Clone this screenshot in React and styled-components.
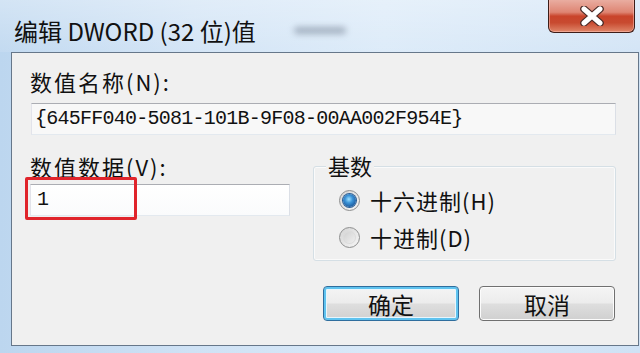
import styled, { createGlobalStyle } from "styled-components";

const CJK = `"Noto Sans CJK SC", "Noto Sans", sans-serif`;
const MONO = `"Liberation Mono", "DejaVu Sans Mono", monospace`;

const GlobalStyle = createGlobalStyle`
  html, body {
    margin: 0;
    padding: 0;
    background: #c9def3;
  }
  body {
    width: 640px;
    height: 353px;
    overflow: hidden;
    font-family: ${CJK};
  }
`;

const App = () => {
  return (
    <>
      <GlobalStyle />
      <Window>
        <TitleBar>
          <Title>编辑 DWORD (32 位)值</Title>
          <Smudge />
          <CloseButton aria-label="关闭">
            <svg width="26" height="20" viewBox="0 0 26 20">
              <path
                d="M5 3 L21 17 M21 3 L5 17"
                stroke="#4a2a26"
                strokeWidth="7.5"
                strokeLinecap="round"
              />
              <path
                d="M5 3 L21 17 M21 3 L5 17"
                stroke="#fff"
                strokeWidth="5"
                strokeLinecap="round"
              />
            </svg>
          </CloseButton>
        </TitleBar>
        <Frame>
          <Client>
            <Label>数值名称(N):</Label>
            <NameField>{"{645FF040-5081-101B-9F08-00AA002F954E}"}</NameField>
            <Lower>
              <div>
                <Label $top={17}>数值数据(V):</Label>
                <DataWrap>
                  <DataField>1</DataField>
                  <Highlight />
                </DataWrap>
              </div>
              <GroupBox>
                <Legend>基数</Legend>
                <RadioRow>
                  <Radio $checked />
                  <RadioText>十六进制(H)</RadioText>
                </RadioRow>
                <RadioRow>
                  <Radio />
                  <RadioText>十进制(D)</RadioText>
                </RadioRow>
              </GroupBox>
            </Lower>
            <Buttons>
              <Button $default>确定</Button>
              <Button>取消</Button>
            </Buttons>
          </Client>
        </Frame>
      </Window>
    </>
  );
};

export default App;

const Window = styled.div`
  width: 640px;
  height: 353px;
  display: flex;
  flex-direction: column;
  background: linear-gradient(
    90deg,
    #bcd6ef 0%,
    #cfe2f5 30%,
    #d9e9f8 60%,
    #cfe2f5 100%
  );
`;

const TitleBar = styled.div`
  height: 52px;
  display: flex;
  align-items: flex-start;
  padding-left: 14px;
  background: linear-gradient(
    180deg,
    rgba(255, 255, 255, 0.35) 0%,
    rgba(255, 255, 255, 0.1) 100%
  );
`;

const Title = styled.div`
  margin-top: 16px;
  font-family: ${CJK};
  font-size: 24px;
  line-height: 30px;
  color: #111;
  white-space: nowrap;
`;

const Smudge = styled.div`
  width: 52px;
  height: 7px;
  margin: 27px 0 0 38px;
  border-radius: 4px;
  background: rgba(90, 105, 125, 0.45);
  filter: blur(3px);
`;

const CloseButton = styled.div`
  margin-left: auto;
  margin-right: 5px;
  margin-top: -1px;
  width: 87px;
  height: 34px;
  box-sizing: border-box;
  display: flex;
  align-items: center;
  justify-content: center;
  border: 1px solid #3d1d18;
  border-top: none;
  border-radius: 0 0 6px 6px;
  background: linear-gradient(
    180deg,
    #eab0a4 0%,
    #de8573 40%,
    #c9442b 52%,
    #c84a30 72%,
    #e0876a 100%
  );
  box-shadow: inset 0 0 0 1px rgba(255, 200, 190, 0.5);
`;

const Frame = styled.div`
  flex: 1;
  display: flex;
  padding: 0 1px 7px 11px;
`;

const Client = styled.div`
  flex: 1;
  box-sizing: border-box;
  display: flex;
  flex-direction: column;
  padding: 0 22px 0 18px;
  background: #f0f0f0;
  border: 1px solid #66778a;
`;

const Label = styled.div`
  margin-top: ${(p) => p.$top ?? 14}px;
  height: 28px;
  font-family: ${CJK};
  font-size: 22px;
  line-height: 28px;
  letter-spacing: 2px;
  color: #111;
  white-space: nowrap;
`;

const TextBox = styled.div`
  box-sizing: border-box;
  height: 32px;
  padding-left: 3px;
  font-family: ${MONO};
  font-size: 20px;
  line-height: 30px;
  color: #111;
  border: 1px solid;
  border-color: #abadb3 #dbdfe6 #e3e9ef #e2e3ea;
  white-space: nowrap;
`;

const NameField = styled(TextBox)`
  margin: 8px 0 0 1px;
  letter-spacing: -0.75px;
  background: #f8f8f8;
`;

const Lower = styled.div`
  display: grid;
  grid-template-columns: 260px 303px;
  column-gap: 23px;
  align-items: start;
`;

const DataWrap = styled.div`
  position: relative;
  margin-top: 4px;
`;

const DataField = styled(TextBox)`
  padding-left: 6px;
  background: linear-gradient(180deg, #ffffff 0%, #fafbfc 100%);
`;

const Highlight = styled.div`
  position: absolute;
  left: -5px;
  top: -7px;
  width: 112px;
  height: 43px;
  box-sizing: border-box;
  border: 3px solid #e0242b;
  border-radius: 2px;
`;

const GroupBox = styled.div`
  position: relative;
  margin-top: 31px;
  height: 95px;
  box-sizing: border-box;
  display: flex;
  flex-direction: column;
  gap: 9px;
  padding: 19px 0 0 25px;
  border: 1px solid #d5dfe5;
  border-radius: 3px;
  box-shadow: inset 0 0 0 1px #fafafa;
`;

const Legend = styled.div`
  position: absolute;
  top: -16px;
  left: 12px;
  padding: 0 2px;
  background: #f0f0f0;
  font-family: ${CJK};
  font-size: 22px;
  line-height: 28px;
  color: #111;
`;

const RadioRow = styled.div`
  height: 28px;
  display: flex;
  align-items: center;
  gap: 10px;
`;

const Radio = styled.div`
  width: 21px;
  height: 21px;
  box-sizing: border-box;
  border-radius: 50%;
  border: 1px solid #8e8f8f;
  background: linear-gradient(135deg, #d4d4d4 0%, #f6f6f6 100%);
  display: flex;
  align-items: center;
  justify-content: center;

  &::after {
    content: "";
    width: 13px;
    height: 13px;
    border-radius: 50%;
    background: ${(p) =>
      p.$checked
        ? "radial-gradient(circle at 45% 40%, #9ee0ff 0%, #3d95d8 35%, #1b5a9e 75%, #173f73 100%)"
        : "linear-gradient(135deg, #cfcfcf 0%, #f2f2f2 100%)"};
    box-shadow: ${(p) =>
      p.$checked ? "0 0 0 1px #2b5f96" : "inset 0 0 0 1px #dcdcdc"};
  }
`;

const RadioText = styled.div`
  font-family: ${CJK};
  font-size: 22px;
  line-height: 28px;
  letter-spacing: 1px;
  color: #111;
  white-space: nowrap;
`;

const Buttons = styled.div`
  display: flex;
  justify-content: flex-end;
  gap: 20px;
  margin-top: 25px;
  padding-right: 1px;
`;

const Button = styled.div`
  width: 136px;
  height: 35px;
  box-sizing: border-box;
  display: flex;
  align-items: center;
  justify-content: center;
  font-family: ${CJK};
  font-size: 23px;
  color: #111;
  border-radius: 4px;
  border: 1px solid ${(p) => (p.$default ? "#2f6e9e" : "#707070")};
  background: linear-gradient(
    180deg,
    #f4f4f4 0%,
    #ececec 48%,
    #dedede 52%,
    #d0d0d0 100%
  );
  box-shadow: ${(p) =>
    p.$default
      ? "inset 0 0 0 2px #5fc3ef, inset 0 0 0 3px #e8f6fd"
      : "inset 0 0 0 1px #fcfcfc"};
`;
